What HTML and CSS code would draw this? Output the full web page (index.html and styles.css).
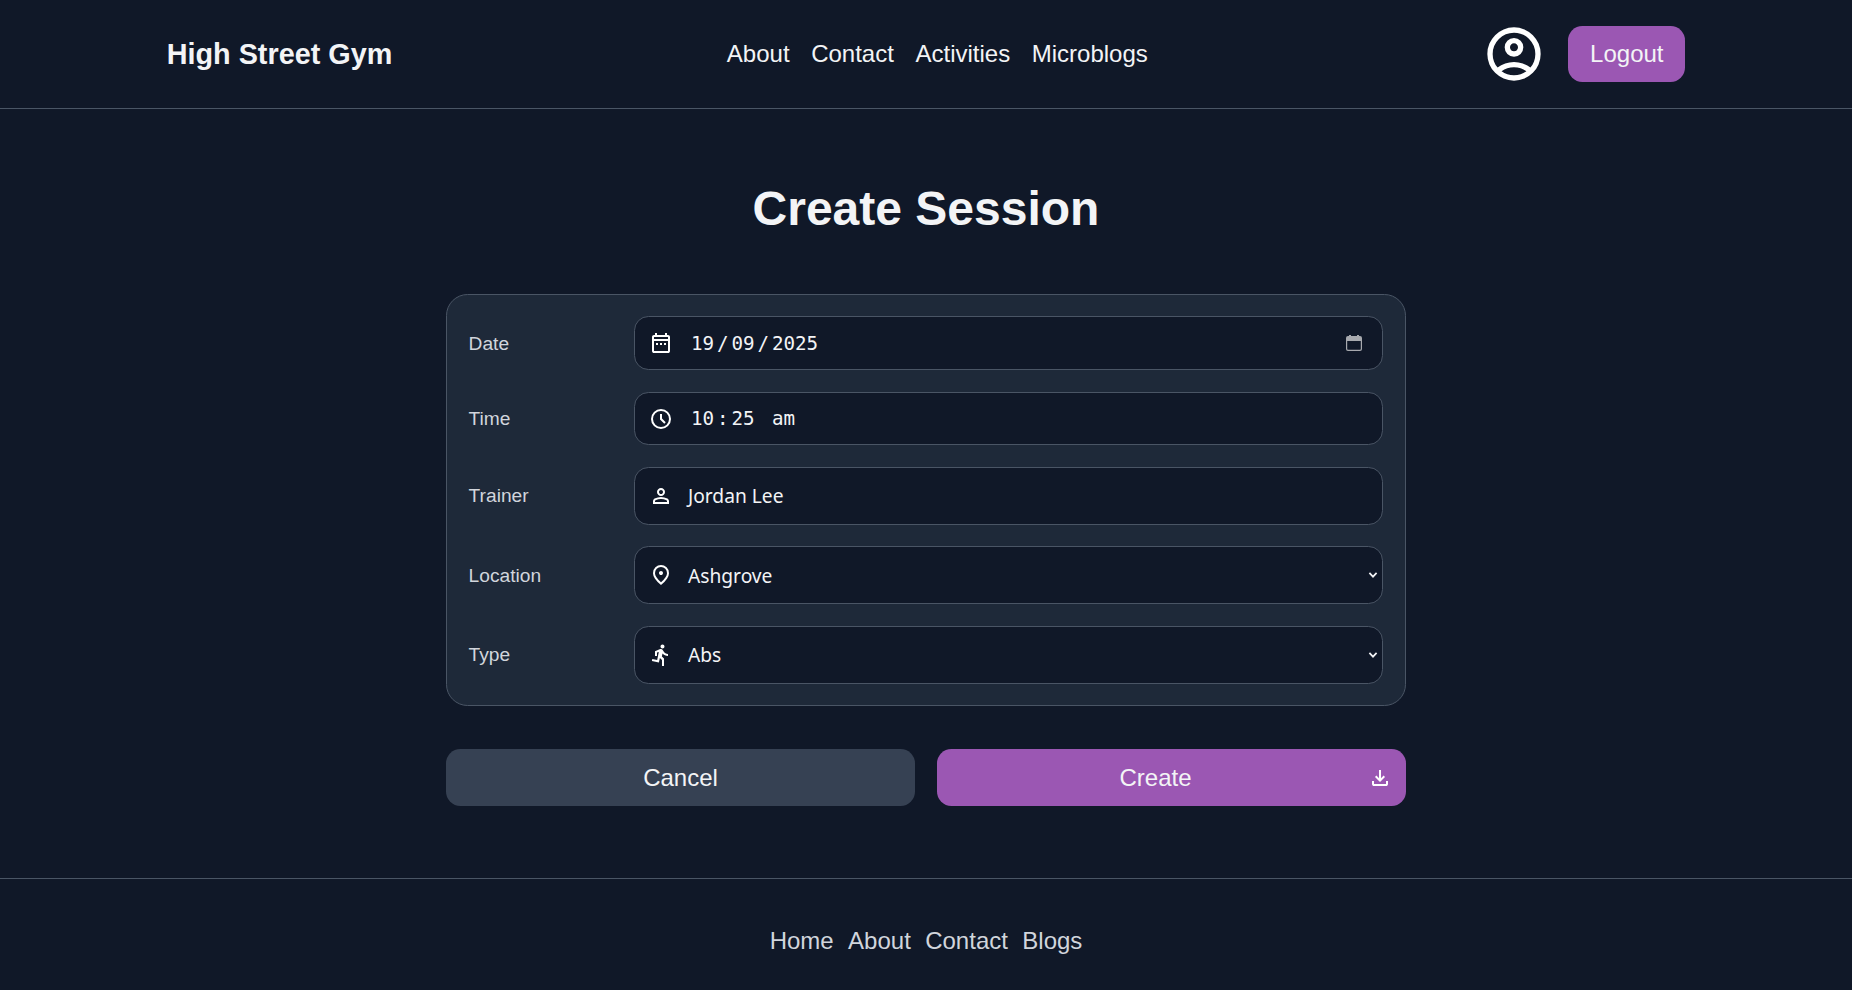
FILE: index.html
```html
<!DOCTYPE html>
<html lang="en">
<head>
<meta charset="utf-8">
<title>Create Session - High Street Gym</title>
<link rel="stylesheet" href="styles.css">
</head>
<body>
<header class="site-header">
  <div class="brand">High Street Gym</div>
  <nav class="main-nav">
    <a>About</a><a>Contact</a><a>Activities</a><a>Microblogs</a>
  </nav>
  <div class="account">
    <svg class="avatar" viewBox="0 0 24 24"><path d="M5.85 17.1q1.275-.975 2.85-1.537T12 15t3.3.563t2.85 1.537q.875-1.025 1.363-2.325T20 12q0-3.325-2.337-5.663T12 4T6.337 6.338T4 12q0 1.475.488 2.775T5.85 17.1m6.15-4.1q-1.475 0-2.488-1.012T8.5 9.5t1.013-2.488T12 6t2.488 1.013T15.5 9.5t-1.012 2.488T12 13m0 9q-2.075 0-3.9-.788t-3.175-2.137T2.788 15.9T2 12t.788-3.9t2.137-3.175T8.1 2.788T12 2t3.9.788t3.175 2.137T21.213 8.1T22 12t-.788 3.9t-2.137 3.175t-3.175 2.138T12 22m0-2q1.325 0 2.5-.387t2.15-1.113q-.975-.725-2.15-1.112T12 17t-2.5.388t-2.15 1.112q.975.725 2.15 1.113T12 20m0-9q.65 0 1.075-.425T13.5 9.5t-.425-1.075T12 8t-1.075.425T10.5 9.5t.425 1.075T12 11"/></svg>
    <button class="btn logout">Logout</button>
  </div>
</header>

<main class="content">
  <h1>Create Session</h1>
  <form class="session-form">
    <section class="card">
      <div class="row">
        <label>Date</label>
        <div class="field field-date">
          <svg class="icon" viewBox="0 0 24 24"><path d="M5 22q-.825 0-1.412-.587T3 20V6q0-.825.588-1.412T5 4h1V2h2v2h8V2h2v2h1q.825 0 1.413.588T21 6v14q0 .825-.587 1.413T19 22zm0-2h14V10H5zM5 8h14V6H5zM7 12h2v2H7zm4 0h2v2h-2zm4 0h2v2h-2z" fill-rule="evenodd"/></svg>
          <span class="mono">19<i>/</i>09<i>/</i>2025</span>
          <svg class="picker" viewBox="0 0 16 16"><path d="M3 0h2v1h6V0h2v1h1a2 2 0 0 1 2 2v11a2 2 0 0 1-2 2H2a2 2 0 0 1-2-2V3a2 2 0 0 1 2-2h1zM1.200 6v8a.8.8 0 0 0 .8.8h12a.8.8 0 0 0 .8-.8V6z" fill-rule="evenodd"/></svg>
        </div>
      </div>
      <div class="row">
        <label>Time</label>
        <div class="field field-time">
          <svg class="icon" viewBox="0 0 24 24"><path d="m15.300 16.700 1.400-1.400-3.700-3.700V7h-2v5.400z"/><circle class="ring" cx="12" cy="12" r="9"/></svg>
          <span class="mono">10<i>:</i>25<b></b>am</span>
        </div>
      </div>
      <div class="row">
        <label>Trainer</label>
        <div class="field">
          <svg class="icon" viewBox="0 0 24 24"><path d="M12 12q-1.650 0-2.825-1.175T8 8t1.175-2.825T12 4t2.825 1.175T16 8t-1.175 2.825T12 12m-8 8v-2.800q0-.85.438-1.562T5.600 14.550q1.550-.775 3.150-1.162T12 13t3.250.388t3.150 1.162q.725.375 1.163 1.088T20 17.200V20zm2-2h12v-.8q0-.275-.137-.5t-.363-.35q-1.350-.675-2.725-1.012T12 15t-2.775.338T6.500 16.350q-.225.125-.363.35T6 17.200zm6-8q.825 0 1.413-.587T14 8t-.587-1.412T12 6t-1.412.588T10 8t.588 1.413T12 10"/></svg>
          <span class="value">Jordan Lee</span>
        </div>
      </div>
      <div class="row">
        <label>Location</label>
        <div class="field">
          <svg class="icon" viewBox="0 0 24 24"><path d="M12 12q.825 0 1.413-.587T14 10t-.587-1.412T12 8t-1.412.588T10 10t.588 1.413T12 12m0 7.350q3.050-2.800 4.525-5.087T18 10.200q0-2.725-1.737-4.462T12 4T7.738 5.738T6 10.200q0 1.775 1.475 4.063T12 19.350M12 22q-4.025-3.425-6.012-6.362T4 10.200q0-3.750 2.413-5.975T12 2t5.588 2.225T20 10.200q0 2.500-1.987 5.438T12 22"/></svg>
          <span class="value">Ashgrove</span>
          <svg class="chevron" viewBox="0 0 8 6"><path d="M.4 .9 4 4.700 7.600 .9"/></svg>
        </div>
      </div>
      <div class="row row-type">
        <label>Type</label>
        <div class="field">
          <svg class="icon" viewBox="0 0 24 24"><path d="M13.490 5.480c1.100 0 2-.9 2-2s-.9-2-2-2-2 .9-2 2 .9 2 2 2zm-3.600 13.900l1-4.400 2.100 2v6h2v-7.500l-2.100-2 .6-3c1.300 1.500 3.300 2.500 5.500 2.500v-2c-1.900 0-3.500-1-4.300-2.400l-1-1.600c-.4-.6-1-1-1.700-1-.3 0-.5.1-.8.1l-5.200 2.200v4.700h2v-3.400l1.800-.7-1.600 8.100-4.900-1-.4 2 7 1.400z"/></svg>
          <span class="value">Abs</span>
          <svg class="chevron" viewBox="0 0 8 6"><path d="M.4 .9 4 4.700 7.600 .9"/></svg>
        </div>
      </div>
    </section>
    <div class="actions">
      <button class="btn cancel" type="button">Cancel</button>
      <button class="btn create" type="button">
        <span>Create</span>
        <svg class="icon" viewBox="0 0 24 24"><path d="m12 16-5-5 1.400-1.450 2.600 2.600V4h2v8.150l2.600-2.600L17 11zm-6 4q-.825 0-1.412-.587T4 18v-3h2v3h12v-3h2v3q0 .825-.587 1.413T18 20z"/></svg>
      </button>
    </div>
  </form>
</main>

<footer class="site-footer">
  <a>Home</a><a>About</a><a>Contact</a><a>Blogs</a>
</footer>
</body>
</html>
```

FILE: styles.css
```css
* { box-sizing: border-box; }

body {
  margin: 0;
  height: 990px;
  overflow: hidden;
  display: flex;
  flex-direction: column;
  background: #101828;
  color: #f3f4f6;
  font-family: "Liberation Sans", Arial, sans-serif;
  font-size: 24px;
}

.site-header {
  height: 109px;
  flex: none;
  padding: 0 9%;
  display: flex;
  align-items: center;
  justify-content: space-between;
  border-bottom: 1px solid #4a5565;
}

.brand { font-size: 28.8px; font-weight: 700; }

.main-nav { display: flex; gap: 21.6px; }

.account { display: flex; align-items: center; gap: 22px; }

.avatar { width: 64px; height: 64px; fill: #fff; }

.btn {
  border: 0;
  border-radius: 14.4px;
  padding: 0;
  color: #f3f4f6;
  font: 24px "Liberation Sans", Arial, sans-serif;
}

.logout { width: 117px; height: 56px; background: #9b57b3; }

.content {
  flex: none;
  height: 769px;
  display: flex;
  flex-direction: column;
  align-items: center;
}

h1 {
  margin: 72px 0 58px;
  font-size: 48px;
  line-height: 55px;
}

.session-form { width: 960px; }

.card {
  height: 412px;
  padding: 21px 22px 21px 21.6px;
  display: flex;
  flex-direction: column;
  justify-content: space-between;
  background: #1e2939;
  border: 1px solid #4a5565;
  border-radius: 21.6px;
}

.row { display: flex; align-items: center; }

label {
  width: 165.4px;
  flex: none;
  padding-top: 1px;
  color: #d1d5dc;
  font-size: 19.2px;
}

.field {
  flex: 1;
  height: 58px;
  padding: 0 2px 0 14px;
  display: flex;
  align-items: center;
  background: #101828;
  border: 1px solid #4a5565;
  border-radius: 14.4px;
}

.field-date { height: 54px; padding-right: 20px; }
.field-time { height: 53px; }
.field-time .icon { margin-top: 1px; }
.row-type label { padding: 0 0 1px; }
.row-type .value { margin-bottom: 1px; }

.icon { width: 24px; height: 24px; flex: none; fill: #fff; }

.ring { fill: none; stroke: #fff; stroke-width: 2; }

.value {
  margin-left: 15px;
  font: 19.2px "Noto Sans", sans-serif;
}

.mono {
  margin-left: 18px;
  font: 19.2px "DejaVu Sans Mono", monospace;
}

.mono i { font-style: normal; margin: 0 2.9px; }
.mono b { display: inline-block; width: 17.5px; }

.picker {
  width: 16px;
  height: 16px;
  margin-left: auto;
  fill: #a7a9ae;
}

.chevron {
  width: 8px;
  height: 6px;
  margin: 0 3px 0 auto;
  overflow: visible;
  fill: none;
  stroke: #f3f4f6;
  stroke-width: 1.7;
}

.actions {
  margin-top: 43px;
  display: grid;
  grid-template-columns: 1fr 1fr;
  gap: 22px;
}

.cancel, .create { height: 57px; }
.cancel { background: #364153; }

.create {
  padding: 0 14px 0 6px;
  display: flex;
  align-items: center;
  background: #9b57b3;
}

.create span { flex: 1; text-align: center; }

.site-footer {
  flex: 1;
  padding-top: 48px;
  display: flex;
  justify-content: center;
  gap: 14.4px;
  border-top: 1px solid #4a5565;
  color: #d1d5dc;
}
```
